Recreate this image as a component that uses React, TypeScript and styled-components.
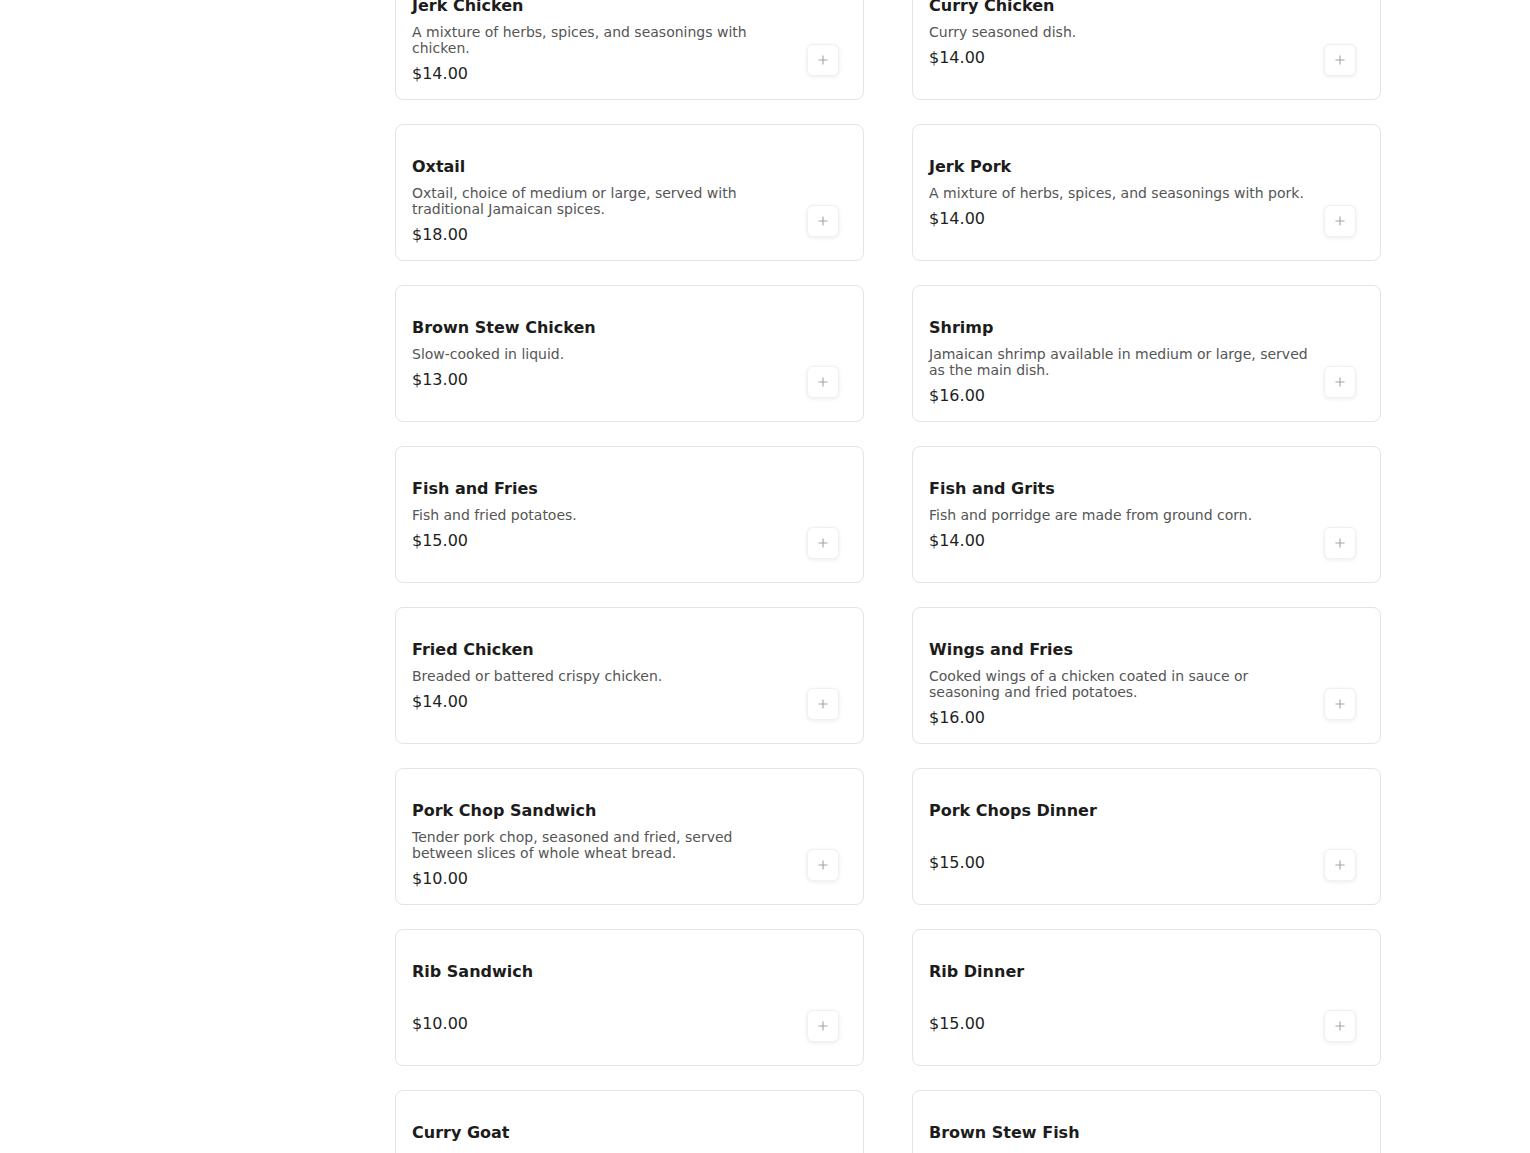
import React from "react";
import styled, { createGlobalStyle } from "styled-components";

const Global = createGlobalStyle`
  html, body {
    margin: 0;
    padding: 0;
    background: #ffffff;
    overflow: hidden;
    font-family: "DejaVu Sans", "Liberation Sans", sans-serif;
  }
`;

const Page = styled.div`
  display: flex;
  height: 1153px;
  overflow: hidden;
`;

const Sidebar = styled.aside`
  flex: 0 0 395px;
`;

const MenuGrid = styled.section`
  width: 986px;
  margin-top: -37px;
  display: grid;
  grid-template-columns: 1fr 1fr;
  column-gap: 48px;
  row-gap: 24px;
  align-content: start;
`;

const Card = styled.article`
  box-sizing: border-box;
  height: 137px;
  border: 1px solid #e4e4e4;
  border-radius: 8px;
  background: #fff;
  display: flex;
  align-items: flex-end;
  gap: 14px;
  padding: 32px 24px 14px 16px;
`;

const Info = styled.div`
  flex: 1;
  align-self: flex-start;
  display: flex;
  flex-direction: column;
  min-width: 0;
`;

const Title = styled.h3`
  margin: 0 0 8px;
  font-size: 16px;
  line-height: 20px;
  font-weight: 700;
  color: #1c1c1c;
`;

const Desc = styled.p`
  margin: 0 0 8px;
  min-height: 16px;
  font-size: 14px;
  line-height: 16px;
  color: #555555;
`;

const Price = styled.span`
  font-size: 16px;
  line-height: 20px;
  color: #1f1f1f;
`;

const AddButton = styled.button`
  flex: 0 0 32px;
  width: 32px;
  height: 32px;
  margin-bottom: 9px;
  border: 1px solid #f1f1f1;
  border-radius: 6px;
  background: #fff;
  box-shadow: 0 1px 4px rgba(0, 0, 0, 0.08);
  display: flex;
  align-items: center;
  justify-content: center;
  padding: 0;
  cursor: pointer;
`;

type Item = { name: string; desc: string; price: string };

const items: Item[] = [
  { name: "Jerk Chicken", desc: "A mixture of herbs, spices, and seasonings with chicken.", price: "$14.00" },
  { name: "Curry Chicken", desc: "Curry seasoned dish.", price: "$14.00" },
  { name: "Oxtail", desc: "Oxtail, choice of medium or large, served with traditional Jamaican spices.", price: "$18.00" },
  { name: "Jerk Pork", desc: "A mixture of herbs, spices, and seasonings with pork.", price: "$14.00" },
  { name: "Brown Stew Chicken", desc: "Slow-cooked in liquid.", price: "$13.00" },
  { name: "Shrimp", desc: "Jamaican shrimp available in medium or large, served as the main dish.", price: "$16.00" },
  { name: "Fish and Fries", desc: "Fish and fried potatoes.", price: "$15.00" },
  { name: "Fish and Grits", desc: "Fish and porridge are made from ground corn.", price: "$14.00" },
  { name: "Fried Chicken", desc: "Breaded or battered crispy chicken.", price: "$14.00" },
  { name: "Wings and Fries", desc: "Cooked wings of a chicken coated in sauce or seasoning and fried potatoes.", price: "$16.00" },
  { name: "Pork Chop Sandwich", desc: "Tender pork chop, seasoned and fried, served between slices of whole wheat bread.", price: "$10.00" },
  { name: "Pork Chops Dinner", desc: "", price: "$15.00" },
  { name: "Rib Sandwich", desc: "", price: "$10.00" },
  { name: "Rib Dinner", desc: "", price: "$15.00" },
  { name: "Curry Goat", desc: "Goat meat slow-cooked in curry.", price: "$16.00" },
  { name: "Brown Stew Fish", desc: "Fish stewed in a rich brown sauce.", price: "$16.00" },
];

const PlusIcon = () => (
  <svg width="10" height="10" viewBox="0 0 10 10" fill="none">
    <path d="M5 0.5v9M0.5 5h9" stroke="#a3a3a3" strokeWidth="1.1" />
  </svg>
);

export default function App() {
  return (
    <>
      <Global />
      <Page>
        <Sidebar />
        <MenuGrid>
          {items.map((it) => (
            <Card key={it.name}>
              <Info>
                <Title>{it.name}</Title>
                <Desc>{it.desc}</Desc>
                <Price>{it.price}</Price>
              </Info>
              <AddButton aria-label={`Add ${it.name}`}>
                <PlusIcon />
              </AddButton>
            </Card>
          ))}
        </MenuGrid>
      </Page>
    </>
  );
}
